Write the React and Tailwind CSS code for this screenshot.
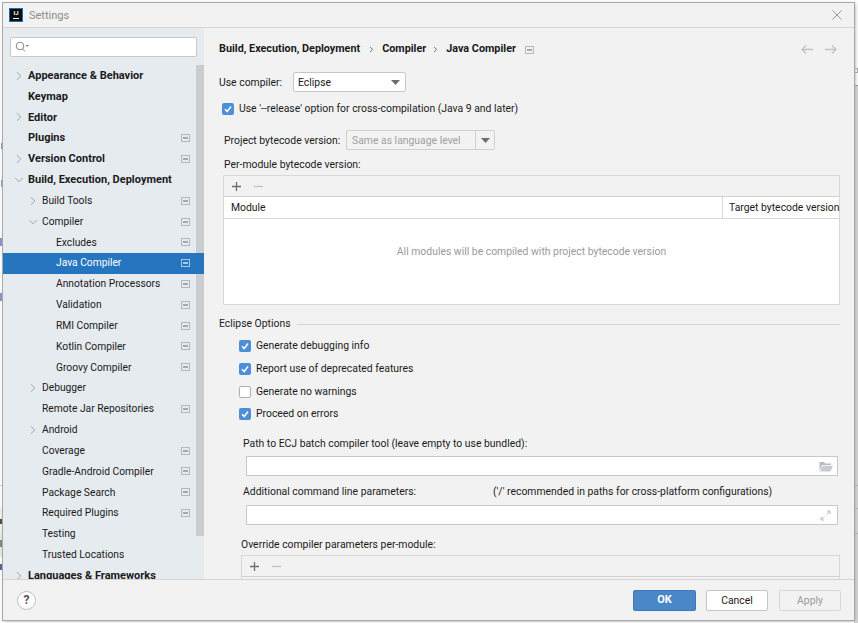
import { ChevronRight, ChevronDown } from 'lucide-react';

const tree = [
  { label: 'Appearance & Behavior', depth: 0, arrow: 'right', bold: true },
  { label: 'Keymap', depth: 0, bold: true },
  { label: 'Editor', depth: 0, arrow: 'right', bold: true },
  { label: 'Plugins', depth: 0, bold: true, badge: true },
  { label: 'Version Control', depth: 0, arrow: 'right', bold: true, badge: true },
  { label: 'Build, Execution, Deployment', depth: 0, arrow: 'down', bold: true },
  { label: 'Build Tools', depth: 1, arrow: 'right', badge: true },
  { label: 'Compiler', depth: 1, arrow: 'down', badge: true },
  { label: 'Excludes', depth: 2, badge: true },
  { label: 'Java Compiler', depth: 2, badge: true, selected: true },
  { label: 'Annotation Processors', depth: 2, badge: true },
  { label: 'Validation', depth: 2, badge: true },
  { label: 'RMI Compiler', depth: 2, badge: true },
  { label: 'Kotlin Compiler', depth: 2, badge: true },
  { label: 'Groovy Compiler', depth: 2, badge: true },
  { label: 'Debugger', depth: 1, arrow: 'right' },
  { label: 'Remote Jar Repositories', depth: 1, badge: true },
  { label: 'Android', depth: 1, arrow: 'right' },
  { label: 'Coverage', depth: 1, badge: true },
  { label: 'Gradle-Android Compiler', depth: 1, badge: true },
  { label: 'Package Search', depth: 1, badge: true },
  { label: 'Required Plugins', depth: 1, badge: true },
  { label: 'Testing', depth: 1 },
  { label: 'Trusted Locations', depth: 1 },
  { label: 'Languages & Frameworks', depth: 0, arrow: 'right', bold: true },
];

function ProjectIcon({ selected }) {
  return (
    <svg width="9" height="8" viewBox="0 0 9 8" className="shrink-0">
      <rect x="0.5" y="0.5" width="8" height="7" fill="none" stroke={selected ? '#a9c8e6' : '#b4b8bc'} />
      <rect x="2" y="3" width="5" height="2" fill={selected ? '#a9c8e6' : '#a5a9ad'} />
    </svg>
  );
}

function TreeRow({ item }) {
  const pad = item.depth === 0 ? 'pl-[25px]' : item.depth === 1 ? 'pl-[39px]' : 'pl-[53px]';
  const pos = item.depth === 0 ? 'left-[9px]' : 'left-[23px]';
  return (
    <div className={`relative flex items-center h-[20.83px] shrink-0 pr-[14px] ${pad} ${item.selected ? 'bg-[#2675bf] text-white' : 'text-[#1a1a1a]'}`}>
      {item.arrow === 'right' && <ChevronRight size={14} strokeWidth={1} className={`absolute ${pos} text-[#6e6e6e]`} />}
      {item.arrow === 'down' && <ChevronDown size={14} strokeWidth={1} className={`absolute ${pos} text-[#6e6e6e]`} />}
      <span className={`flex-1 whitespace-nowrap ${item.bold ? 'font-bold text-[11px] pt-px' : 'text-[10.25px]'}`}>{item.label}</span>
      {item.badge && <ProjectIcon selected={item.selected} />}
    </div>
  );
}

function Checkbox({ checked }) {
  if (!checked) return <span className="w-[12px] h-[12px] rounded-[2px] bg-white border border-[#b0b0b0] shrink-0" />;
  return (
    <span className="w-[12px] h-[12px] rounded-[2px] bg-[#4c8fd6] shrink-0 flex items-center justify-center">
      <svg width="10" height="10" viewBox="0 0 10 10">
        <path d="M2 5.2 L4.2 7.5 L8 2.5" fill="none" stroke="#fff" strokeWidth="1.5" />
      </svg>
    </span>
  );
}

function CheckRow({ checked, label, className }) {
  return (
    <div className={`flex items-center gap-[5px] h-[16px] ${className}`}>
      <Checkbox checked={checked} />
      <span className="whitespace-nowrap">{label}</span>
    </div>
  );
}

function Caret({ color = '#6e6e6e' }) {
  return (
    <svg width="9" height="5" viewBox="0 0 9 5" className="shrink-0">
      <path d="M0 0 H9 L4.5 5 Z" fill={color} />
    </svg>
  );
}

function PlusMinus() {
  return (
    <div className="flex items-center gap-[11px] pl-[7px] h-full">
      <svg width="11" height="11" viewBox="0 0 11 11">
        <path d="M5.5 1 V10 M1 5.5 H10" stroke="#6e6e6e" strokeWidth="1.3" />
      </svg>
      <svg width="11" height="11" viewBox="0 0 11 11">
        <path d="M1 5.5 H10" stroke="#c0c0c0" strokeWidth="1.3" />
      </svg>
    </div>
  );
}

export default function App() {
  return (
    <div className="relative w-[858px] h-[623px] overflow-hidden bg-[#fbfbfb] text-[10.4px] text-[#1a1a1a] [font-family:Roboto,sans-serif]">
      {/* bits of the window behind the dialog */}
      <span className="absolute left-[1px] top-[143px] w-[2px] h-[6px] bg-[#8a93c4]" />
      <span className="absolute left-[1px] top-[180px] w-[2px] h-[7px] bg-[#8a93c4]" />
      <span className="absolute left-0 top-[238px] w-[3px] h-[8px] bg-[#8a93c4]" />
      <span className="absolute left-0 top-[293px] w-[3px] h-[8px] bg-[#8a93c4]" />
      <span className="absolute left-0 top-[485px] w-[3px] h-px bg-[#d0d0d0]" />
      <span className="absolute left-0 top-[508px] w-[3px] h-[26px] bg-[#eef0e6]" />
      <span className="absolute left-0 top-[519px] w-[3px] h-[5px] bg-[#4a4a4a]" />
      <span className="absolute left-0 top-[534px] w-[3px] h-[23px] bg-[#e2ead6]" />
      <span className="absolute left-0 top-[540px] w-[3px] h-[7px] bg-[#7f8a78]" />
      <span className="absolute left-0 top-[564px] w-[3px] h-[6px] bg-[#5c5f94]" />
      <span className="absolute right-0 top-[85px] bottom-0 w-[4px] bg-[#d4d4d4]" />
      <span className="absolute right-0 top-[68px] w-[4px] h-[5px] border border-[#aaaaaa]" />
      <span className="absolute right-0 top-[85px] w-[4px] h-px bg-[#999999]" />
      <span className="absolute right-0 top-[485px] w-[4px] h-px bg-[#b4b4b4]" />
      <span className="absolute right-0 top-[508px] w-[4px] h-px bg-[#b4b4b4]" />
      <span className="absolute right-0 top-[533px] w-[4px] h-px bg-[#b4b4b4]" />

      <div className="relative ml-[3px] mt-[3px] w-[851px] h-[617px] flex flex-col bg-[#f2f2f2] shadow-[0_0_0_1px_#a8a8a8,1px_1px_3px_#a0a0a0]">
        {/* title bar */}
        <div className="h-[25px] shrink-0 flex items-center border-b border-[#d4d4d4] pl-[6px] pr-[12px]">
          <div className="w-[14px] h-[14px] bg-[#0c0c0c] border border-[#1d6fb8] flex flex-col items-center text-white text-[6px] leading-[8px] font-bold">
            <span>IJ</span>
            <span className="w-[6px] h-px bg-white mt-[1px]" />
          </div>
          <span className="ml-[6px] flex-1 pt-[2px] text-[11px] text-[#8c8c8c]">Settings</span>
          <svg width="10" height="10" viewBox="0 0 10 10">
            <path d="M0.5 0.5 L9.5 9.5 M9.5 0.5 L0.5 9.5" stroke="#9a9a9a" strokeWidth="1" />
          </svg>
        </div>

        <div className="flex-1 flex min-h-0">
          {/* sidebar */}
          <div className="relative w-[201px] shrink-0 bg-[#e6ebf0] overflow-hidden flex flex-col">
            <div className="absolute right-0 top-[37px] w-[8px] h-[471px] bg-[#c9cdd1]" />
            <div className="relative mx-[7px] mt-[9px] h-[20px] shrink-0 bg-white border border-[#c8c8c8] rounded-[2px] flex items-center pl-[4px]">
              <svg width="14" height="12" viewBox="0 0 14 12">
                <circle cx="5" cy="5" r="3.8" fill="none" stroke="#8a8a8a" />
                <path d="M8 8 L10 10.5" stroke="#8a8a8a" />
                <path d="M10.5 4 H14 L12.2 6 Z" fill="#8a8a8a" />
              </svg>
            </div>
            <div className="mt-[8.3px] flex flex-col">
              {tree.map((item) => <TreeRow key={item.label} item={item} />)}
            </div>
          </div>

          {/* content */}
          <div className="flex-1 min-w-0 overflow-hidden pl-[15px] pr-[14px]">
            <div className="flex items-center h-[40px] pt-[3px] font-bold text-[10.8px] whitespace-nowrap">
              <span>Build, Execution, Deployment</span>
              <ChevronRight size={9} strokeWidth={2} className="ml-[7px] mr-[6px] text-[#444]" />
              <span>Compiler</span>
              <ChevronRight size={9} strokeWidth={2} className="ml-[5px] mr-[6px] text-[#444]" />
              <span>Java Compiler</span>
              <span className="ml-[9px]"><ProjectIcon /></span>
              <span className="flex-1" />
              <svg width="36" height="11" viewBox="0 0 36 11" className="mr-[3px]">
                <path d="M12 5.5 H1 M5 1.5 L1 5.5 L5 9.5 M24 5.5 H35 M31 1.5 L35 5.5 L31 9.5" fill="none" stroke="#c2c2c2" strokeWidth="1.3" />
              </svg>
            </div>

            <div className="flex items-center h-[20px] mt-[4px]">
              <span className="w-[74px] pt-px">Use compiler:</span>
              <div className="w-[113px] h-[20px] bg-white border border-[#c8c8c8] rounded-[2px] flex items-center justify-between pl-[4px] pr-[5px]">
                <span className="pt-px">Eclipse</span>
                <Caret />
              </div>
            </div>
            <CheckRow checked label="Use '--release' option for cross-compilation (Java 9 and later)" className="mt-[8px] ml-[3px] pt-px" />

            <div className="flex items-center h-[20px] mt-[14px] ml-[5px]">
              <span className="w-[122px] pt-px whitespace-nowrap">Project bytecode version:</span>
              <div className="w-[149px] h-[20px] bg-[#f2f2f2] border border-[#d0d0d0] rounded-[2px] flex items-center text-[#a0a0a0]">
                <span className="flex-1 pl-[5px] pt-px whitespace-nowrap">Same as language level</span>
                <span className="w-[19px] h-full border-l border-[#d0d0d0] flex items-center justify-center"><Caret /></span>
              </div>
            </div>
            <div className="ml-[5px] mt-[6px] h-[16px] pt-[2px] flex items-center">Per-module bytecode version:</div>

            <div className="ml-[4px] mt-[3px] h-[130px] border border-[#d8d8d8] flex flex-col">
              <div className="h-[21px] shrink-0 border-b border-[#d0d0d0]"><PlusMinus /></div>
              <div className="h-[22px] shrink-0 bg-white border-b border-[#d8d8d8] flex items-center">
                <span className="flex-1 pl-[7px] pt-px">Module</span>
                <span className="w-[117px] h-full border-l border-[#d8d8d8] flex items-center pl-[6px] pt-px whitespace-nowrap">Target bytecode version</span>
              </div>
              <div className="flex-1 bg-white flex items-center justify-center pb-[20px] text-[#9a9a9a]">All modules will be compiled with project bytecode version</div>
            </div>

            <div className="flex items-center mt-[11px] h-[16px]">
              <span className="whitespace-nowrap">Eclipse Options</span>
              <span className="flex-1 h-px bg-[#d4d4d4] ml-[6px]" />
            </div>

            <div className="ml-[20px] mt-[6px] flex flex-col">
              <CheckRow checked label="Generate debugging info" />
              <CheckRow checked label="Report use of deprecated features" className="mt-[7px]" />
              <CheckRow label="Generate no warnings" className="mt-[7px]" />
              <CheckRow checked label="Proceed on errors" className="mt-[6px]" />
            </div>

            <div className="ml-[24px] mt-[14px] h-[16px] flex items-center whitespace-nowrap">Path to ECJ batch compiler tool (leave empty to use bundled):</div>
            <div className="ml-[27px] mr-[2px] mt-[4px] h-[20px] bg-white border border-[#c8c8c8] flex items-center justify-end pr-[4px]">
              <svg width="14" height="11" viewBox="0 0 14 11">
                <path d="M0.5 1 H5 L6 2.5 H12 V4 H3 L0.5 10 Z" fill="#b8bcc0" />
                <path d="M3.5 4.8 H14 L11.5 10.5 H1 Z" fill="#c8ccd0" />
              </svg>
            </div>

            <div className="ml-[24px] mt-[7px] h-[16px] pt-[2px] flex items-center whitespace-nowrap">
              <span className="w-[250px]">Additional command line parameters:</span>
              <span>('/' recommended in paths for cross-platform configurations)</span>
            </div>
            <div className="ml-[27px] mr-[2px] mt-[6px] h-[20px] bg-white border border-[#c8c8c8] flex items-center justify-end pr-[6px]">
              <svg width="11" height="11" viewBox="0 0 11 11">
                <path d="M6.5 4.5 L10 1 M7 1 H10 V4 M4.5 6.5 L1 10 M1 7 V10 H4" fill="none" stroke="#b8bcc0" />
              </svg>
            </div>

            <div className="ml-[22px] mt-[11px] h-[16px] pt-[2px] flex items-center whitespace-nowrap">Override compiler parameters per-module:</div>
            <div className="ml-[22px] mt-[3px] h-[40px] border border-[#d8d8d8]">
              <div className="h-[21px] border-b border-[#d0d0d0]"><PlusMinus /></div>
            </div>
          </div>
        </div>

        {/* footer */}
        <div className="relative z-10 h-[41px] shrink-0 bg-[#f2f2f2] border-t border-[#d4d4d4] flex items-center pl-[14px] pr-[13px]">
          <span className="w-[19px] h-[19px] rounded-full bg-white border border-[#c0c0c0] flex items-center justify-center text-[12px] font-bold text-[#555]">?</span>
          <span className="flex-1" />
          <button className="w-[63px] h-[21px] pt-px rounded-[2px] bg-[#4a87c7] border border-[#3f7ab8] text-white font-bold text-[11px]">OK</button>
          <button className="ml-[10px] w-[62px] h-[21px] pt-px rounded-[2px] bg-white border border-[#c4c4c4]">Cancel</button>
          <button className="ml-[11px] w-[62px] h-[21px] pt-px rounded-[2px] bg-[#f2f2f2] border border-[#d8d8d8] text-[#9a9a9a]">Apply</button>
        </div>
      </div>
    </div>
  );
}
